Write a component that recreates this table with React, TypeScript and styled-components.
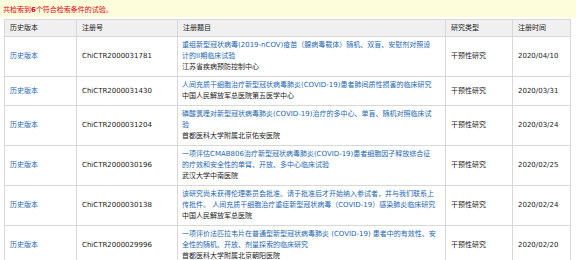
import {FC} from "react";
import styled, {createGlobalStyle} from "styled-components";

interface Trial {
  regNo: string;
  title: string[];
  org: string;
  kind: string;
  date: string;
}

const trials: Trial[] = [
  {
    regNo: 'ChiCTR2000031781',
    title: ['重组新型冠状病毒(2019-nCOV)疫苗（腺病毒载体）随机、双盲、安慰剂对照设', '计的II期临床试验'],
    org: '江苏省疾病预防控制中心',
    kind: '干预性研究',
    date: '2020/04/10',
  },
  {
    regNo: 'ChiCTR2000031430',
    title: ['人间充质干细胞治疗新型冠状病毒肺炎(COVID-19)患者肺间质性损害的临床研究'],
    org: '中国人民解放军总医院第五医学中心',
    kind: '干预性研究',
    date: '2020/03/31',
  },
  {
    regNo: 'ChiCTR2000031204',
    title: ['磷酸氯喹对新型冠状病毒肺炎(COVID-19)治疗的多中心、单盲、随机对照临床试', '验'],
    org: '首都医科大学附属北京佑安医院',
    kind: '干预性研究',
    date: '2020/03/24',
  },
  {
    regNo: 'ChiCTR2000030196',
    title: ['一项评估CMAB806治疗新型冠状病毒肺炎(COVID-19)患者细胞因子释放综合征', '的疗效和安全性的单臂、开放、多中心临床试验'],
    org: '武汉大学中南医院',
    kind: '干预性研究',
    date: '2020/02/25',
  },
  {
    regNo: 'ChiCTR2000030138',
    title: ['该研究尚未获得伦理委员会批准。请于批准后才开始纳入参试者，并与我们联系上', '传批件。 人间充质干细胞治疗重症新型冠状病毒（COVID-19）感染肺炎临床研究'],
    org: '中国人民解放军总医院',
    kind: '干预性研究',
    date: '2020/02/24',
  },
  {
    regNo: 'ChiCTR2000029996',
    title: ['一项评价法匹拉韦片在普通型新型冠状病毒肺炎 (COVID-19) 患者中的有效性、安', '全性的随机、开放、剂量探索的临床研究'],
    org: '首都医科大学附属北京朝阳医院',
    kind: '干预性研究',
    date: '2020/02/20',
  },
]

const App: FC = () => {
  return <>
    <GlobalStyle/>
    <Notice>共检索到<b>6</b>个符合检索条件的试验。</Notice>
    <Table>
      <colgroup>
        <col style={{width: 72}}/>
        <col style={{width: 101}}/>
        <col style={{width: 268}}/>
        <col style={{width: 67}}/>
        <col/>
      </colgroup>
      <thead>
      <tr>
        <Th>历史版本</Th>
        <Th>注册号</Th>
        <Th>注册题目</Th>
        <Th>研究类型</Th>
        <Th>注册时间</Th>
      </tr>
      </thead>
      <tbody>
      {trials.map(t => (
        <tr key={t.regNo}>
          <Td><Link href="#">历史版本</Link></Td>
          <Td>{t.regNo}</Td>
          <TitleCell>
            <Link href="#">
              {t.title.map((line, i) => <TitleLine key={i}>{line}</TitleLine>)}
            </Link>
            <Org>{t.org}</Org>
          </TitleCell>
          <Td>{t.kind}</Td>
          <Td>{t.date}</Td>
        </tr>
      ))}
      </tbody>
    </Table>
  </>
}

const GlobalStyle = createGlobalStyle`
  body {
    margin: 0;
    background: #fff;
    font-family: "DejaVu Sans", "Noto Sans CJK SC", sans-serif;
    font-size: 7px;
    color: #222;
  }
`

const Notice = styled.div`
  background: #fdfddc;
  color: #e60012;
  height: 11px;
  line-height: 11px;
  padding: 5px 3px 1px;
  margin-bottom: 2px;

  b {
    font-weight: bold;
  }
`

const Table = styled.table`
  margin: 0 4px;
  width: 567px;
  table-layout: fixed;
  border-collapse: collapse;
  line-height: 11px;
`

const Th = styled.th`
  background: #f0f0f0;
  border: 1px solid #d8d8d8;
  padding: 3px 5px 2px;
  text-align: left;
  font-weight: normal;
  color: #222;
`

const Td = styled.td`
  border: 1px solid #d8d8d8;
  padding: 3px 5px 3px;
  vertical-align: middle;
  white-space: nowrap;
`

const TitleCell = styled(Td)`
  padding-left: 4px;
  padding-right: 2px;
`

const TitleLine = styled.div`
`

const Link = styled.a`
  color: #2467b1;
  text-decoration: none;
`

const Org = styled.div`
  color: #222;
`

export default App;
